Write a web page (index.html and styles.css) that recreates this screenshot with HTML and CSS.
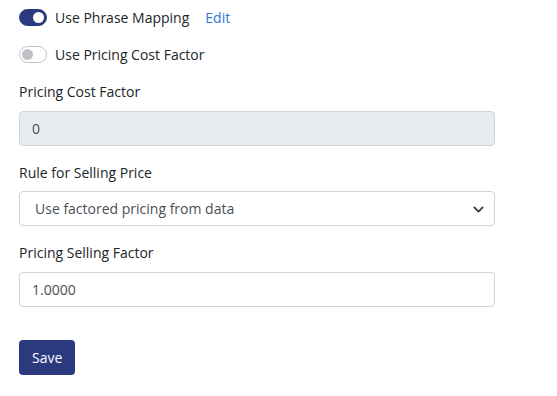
FILE: index.html
```html
<!DOCTYPE html>
<html>
<head>
    <title>Pricing Settings</title>
    <link rel="stylesheet" href="styles.css">
</head>
<body>
    <form class="settings">
        <div class="check">
            <span class="switch on"></span>
            <span class="check-label">Use Phrase Mapping</span>
            <a href="#" class="edit">Edit</a>
        </div>
        <div class="check">
            <span class="switch"></span>
            <span class="check-label">Use Pricing Cost Factor</span>
        </div>

        <div class="group">
            <label>Pricing Cost Factor</label>
            <div class="control disabled">0</div>
        </div>

        <div class="group">
            <label>Rule for Selling Price</label>
            <div class="control select">
                Use factored pricing from data
                <svg class="chevron" width="11" height="11" viewBox="0 0 16 16">
                    <path d="M2 5l6 6 6-6" fill="none" stroke="#343a40" stroke-width="2.6" stroke-linecap="round" stroke-linejoin="round"/>
                </svg>
            </div>
        </div>

        <div class="group">
            <label>Pricing Selling Factor</label>
            <div class="control">1.0000</div>
        </div>

        <button type="button" class="btn">Save</button>
    </form>
</body>
</html>
```

FILE: styles.css
```css
body { margin: 0; padding: 7px 19px; font-family: "Open Sans", "Noto Sans", sans-serif; font-size: 14px; color: #212529; background: #fff; }
.settings { width: 476px; }
.check { display: flex; align-items: center; height: 21px; margin-bottom: 16px; }
.check + .group { margin-top: 2px; }
.switch { position: relative; width: 26px; height: 15px; border: 1px solid #bfc3c8; border-radius: 9px; background: #fff; margin-right: 8px; box-sizing: content-box; }
.switch::after { content: ""; position: absolute; top: 2px; left: 2px; width: 11px; height: 11px; border-radius: 50%; background: #bfc3c8; }
.switch.on { background: #2b3a7f; border-color: #2b3a7f; }
.switch.on::after { left: auto; right: 2px; background: #fff; }
.check-label { color: #212529; }
.edit { color: #2a7bd4; text-decoration: none; margin-left: 16px; }
.group { margin-bottom: 16px; }
label { display: block; line-height: 21px; margin-bottom: 8.5px; }
.control { position: relative; height: 35px; box-sizing: border-box; border: 1px solid #ced4da; border-radius: 4px; padding: 0 12px; line-height: 33px; color: #495057; background: #fff; }
.control.disabled { background: #e9ecef; }
.control.select { padding-left: 15px; }
.chevron { position: absolute; right: 10px; top: 12px; }
.btn { margin-top: 17px; height: 35px; padding: 0 13px; border: none; border-radius: 4px; background: #2b3a7f; color: #fff; font-family: inherit; font-size: 14px; }
```
